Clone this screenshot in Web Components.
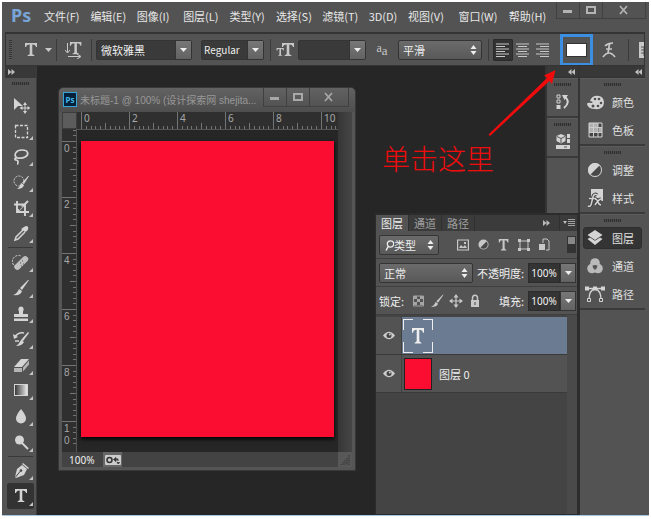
<!DOCTYPE html>
<html lang="zh-CN">
<head>
<meta charset="utf-8">
<title>Photoshop</title>
<style>
html, body { height: 100%; }
body {
  margin: 0; box-sizing: border-box; padding: 2px 2px 4px 2px; background: #fff; overflow: hidden;
  font: 11px/14px "Noto Sans CJK SC", "Liberation Sans", sans-serif; color: #e4e4e4;
}
</style>
</head>
<body>
<ps-app></ps-app>
<script>
const BASE = `*{box-sizing:border-box} button,select,input{font:inherit;color:inherit;margin:0;padding:0;border:0;background:none;outline:0;border-radius:0} button{display:flex;align-items:center;justify-content:center;white-space:nowrap} [hidden]{display:none}`;
function define(tag, css, html) {
  customElements.define(tag, class extends HTMLElement {
    constructor() {
      super();
      const t = document.createElement('template');
      t.innerHTML = `<style>${BASE}${css}</style>` + (typeof html === 'function' ? html(this) : html);
      this.attachShadow({ mode: 'open' }).append(t.content.cloneNode(true));
    }
  });
}

const letterT = '<path d="M1 0h12v4h-1q-.4-2.6-3.7-2.6v9q0 1.5 2 1.6v1H3.7v-1q2-.1 2-1.6v-9Q2.4 1.4 2 4H1z"/>';
const brushPath = '<path d="M17 1L10 11 8 9l8-8zM7 10l3 2q-1 5-9 4 4-1 6-6z"/>';
const ICONS = {
  move: [18, 18, '<path d="M2 2l9 8-5 0-4 4z"/><path d="M13 8v8M9 12h8" stroke="currentColor" fill="none"/><path d="M13 6l2 3h-4zM13 18l2-3h-4zM7.500 12l3-2v4zM18.500 12l-3-2v4z"/>'],
  marquee: [18, 18, '<rect x="3.500" y="3.500" width="12" height="12" fill="none" stroke="currentColor" stroke-width="1.300" stroke-dasharray="3 1.500"/>'],
  lasso: [18, 18, '<path d="M5 11C1 8 4 3 10 3c7 0 7 5 3 7-3 2-6 1-8 1-2-1-3 2-1 2 3 0 2 4 1 4" fill="none" stroke="currentColor" stroke-width="1.700"/>'],
  quick: [18, 18, '<circle cx="7" cy="8" r="5" fill="none" stroke="currentColor" stroke-dasharray="2 1.200"/><path d="M17 3l-5 8-2-1 6-7zM9 10l3 2q-1 4-7 4 3-2 4-6z"/>'],
  crop: [18, 18, '<path d="M5 2v11h12M2 5.500h11V17M6 12l10-10" fill="none" stroke="currentColor" stroke-width="1.900"/><path d="M7 7.500h4L7 11.500z" fill="#535353"/>'],
  dropper: [18, 18, '<path d="M12 3q3-2 4 0t-1 4l-2 1-4-3z"/><path d="M11 6L4 13l-1 3 3-1 7-7" fill="none" stroke="currentColor" stroke-width="1.500"/>'],
  heal: [18, 18, '<path d="M4 14a6 6 0 0 1 5-11" fill="none" stroke="currentColor" stroke-dasharray="2 1.200"/><rect x="1" y="6.500" width="17" height="6" rx="3" transform="rotate(-45 10 10)" opacity=".85"/><path d="M8 10h1m1-2h1m0 3h1m-3 2h1" stroke="#555"/>'],
  brush: [18, 18, brushPath],
  stamp: [18, 18, '<path d="M7 8q-2-5 2-5.500 4 .5 2 5.500v2h5v3H2v-3h5zM2 14.500h14V17H2z"/>'],
  history: [18, 18, '<path d="M17 3l-6 8-2-1 7-8zM9 10l3 2q-2 4-8 4 3-2 5-6z"/><path d="M3 7q3-5 9-4M3 11h4" fill="none" stroke="currentColor" stroke-width="1.500"/><path d="M1 4l1 5 4-2z"/>'],
  eraser: [18, 18, '<path d="M9 3h8l-7 8H2z"/><path d="M2 12h8v4H2zM11 11.500l6-7v4l-6 7z" opacity=".75"/>'],
  gradient: [18, 18, '<defs><linearGradient id="g"><stop stop-color="#333"/><stop offset="1" stop-color="#eee"/></linearGradient></defs><rect x="2.500" y="3.500" width="13" height="11" fill="url(#g)" stroke="currentColor"/>'],
  blur: [18, 18, '<path d="M9 2q5 6 5 9.500a5 5 0 0 1-10 0Q4 8 9 2z"/>'],
  dodge: [18, 18, '<circle cx="7.500" cy="7" r="4.500"/><path d="M10 10l6 6" stroke="currentColor" stroke-width="2"/>'],
  pen: [18, 18, '<path d="M10 4l5 4-3 6-8 3-1-1 2-8z"/><path d="M11 2l6 5-1 1-6-5z"/><path d="M3.500 16l5-6" stroke="#444"/><circle cx="9" cy="9.500" r="1.300" fill="#444"/>'],
  type: [14, 14, letterT],
  typeSmall: [11, 12, '<g transform="scale(.8 .88)">' + letterT + '</g>'],
  typeLarge: [14, 16, '<g transform="scale(1 1.2)">' + letterT + '</g>'],
  brushSmall: [14, 14, '<g transform="scale(.8)">' + brushPath + '</g>'],
  adjustSmall: [11, 11, '<circle cx="5.500" cy="5.500" r="5"/><path d="M8.500 2.500a4.200 4.200 0 0 1-6 6z" fill="#484848"/>'],
  orient: [18, 18, '<g transform="translate(4 1) scale(.95)">' + letterT + '</g><path d="M2.500 2v9M0 9l2.500 3L5 9M3 15.500h12M12 13l4 2.500-4 2.500" fill="none" stroke="currentColor"/>'],
  size: [18, 16, '<g transform="translate(5 1)">' + letterT + '</g><g transform="translate(0 6) scale(.6)">' + letterT + '</g>'],
  left: [16, 14, '<path d="M1 1h13M1 3.500h9M1 6h13M1 8.500h9M1 11h13M1 13.500h9" stroke="currentColor"/>'],
  center: [16, 14, '<path d="M1 1h13M3 3.500h9M1 6h13M3 8.500h9M1 11h13M3 13.500h9" stroke="currentColor"/>'],
  right: [16, 14, '<path d="M1 1h13M5 3.500h9M1 6h13M5 8.500h9M1 11h13M5 13.500h9" stroke="currentColor"/>'],
  warp: [16, 18, '<path d="M4 5q3-3 8-3M8.500 3L7 12M5 8h6M2 16q6-8 12 0" fill="none" stroke="currentColor" stroke-width="1.700"/>'],
  panel: [14, 16, '<path d="M1 0h8l5 4v12H1z"/><path d="M3 5h9M3 8h9M3 11h9M6 5v9" stroke="#555"/>'],
  caret: [7, 4, '<path d="M0 0h7L3.500 4z"/>'],
  updown: [7, 10, '<path d="M.5 4l3-4 3 4zM.5 6h6l-3 4z"/>'],
  collapse: [7, 6, '<path d="M3.500 0v6L0 3zM7 0v6L3.500 3z"/>'],
  expand: [7, 6, '<path d="M0 0v6l3.500-3zM3.500 0v6L7 3z"/>'],
  more: [12, 8, '<path d="M0 2h4L2 5z"/><path d="M5 .5h7M5 2.500h7M5 4.500h7M5 6.500h7" stroke="currentColor" stroke-width=".8"/>'],
  actions: [14, 16, '<path d="M1 1h3v3H1zM1 6h3v3H1z" fill="none" stroke="currentColor"/><path d="M.5 11h4v4h-4zM6 1h6L8.500 6z"/><path d="M9 3q6 5-1 11" fill="none" stroke="currentColor" stroke-width="2"/>'],
  props: [14, 16, '<path d="M5 0l4.500 2v5L5 9.500.5 7V2zM11 0h3v4h-3zM11 5h3v4h-3zM0 11h14v4H0z"/><path d="M1 2.500l4 2 4-2M5 4.500V9M8 13h3" stroke="#555" fill="none"/>'],
  palette: [17, 15, '<path d="M3 6Q5 0 12 1q5 1 5 7-1 7-9 6-7 0-8-5 0-2 5-1 2-1-2-2z"/><g fill="#505050"><circle cx="8" cy="4" r="1.300"/><circle cx="12" cy="4" r="1.300"/><circle cx="14" cy="8" r="1.300"/><circle cx="11" cy="11" r="1.300"/><circle cx="6" cy="11" r="1.500"/></g>'],
  swatches: [15, 16, '<path d="M1 1h13v14H1z" fill="#444" stroke="currentColor"/><path d="M1 1h9v4H1zM1 6h4v4H1zM6 6h4v4H6zM11 6h3v4h-3z" opacity=".75"/><path d="M5.500 1v14M10 1v14M1 5.500h13M1 10.500h13" stroke="#ccc"/>'],
  adjust: [16, 16, '<circle cx="8" cy="8" r="7"/><path d="M13 3A7 7 0 0 1 3 13z" fill="#484848"/><circle cx="8" cy="8" r="6.500" fill="none" stroke="currentColor"/>'],
  styles: [17, 18, '<path d="M4 0h12v12h-4l-5-4-3 2z"/><path d="M10 6q-3-2-4 2l-2 8q-1 2-3 1M2 9.500h7M8 10q2 0 3 3t3 3M14 10q-3 1-6 6" fill="none" stroke="#444" stroke-width="3.500"/><path d="M10 6q-3-2-4 2l-2 8q-1 2-3 1M2 9.500h7M8 10q2 0 3 3t3 3M14 10q-3 1-6 6" fill="none" stroke="currentColor" stroke-width="1.500"/>'],
  layers: [16, 16, '<path d="M8 0l7.500 5L8 10 .5 5zM.5 9L3 7.500l5 3.300 5-3.300L15.500 9 8 15z"/>'],
  channels: [16, 16, '<g opacity=".8"><circle cx="8" cy="5" r="4.800"/><circle cx="5" cy="10.500" r="4.800"/><circle cx="11" cy="10.500" r="4.800"/></g><path d="M5.500 7.500q2.500-1 5 0 0 3-2.500 4.500-2.500-1.500-2.500-4.500z" fill="#555"/>'],
  paths: [20, 17, '<path d="M4 2.500h12M4 14Q4 4 10 3q6 1 6 11" fill="none" stroke="currentColor" stroke-width="1.300"/><path d="M0 .5h4v4H0zM16 .5h4v4h-4zM8 .5h4v4H8z"/><path d="M2.500 12.500h3v3h-3zM14.500 12.500h3v3h-3z" fill="#505050" stroke="currentColor"/>'],
  search: [9, 12, '<circle cx="5.500" cy="4" r="3.200" fill="none" stroke="currentColor" stroke-width="1.200"/><path d="M3.500 6L1 10.500" stroke="currentColor" stroke-width="1.500"/>'],
  image: [12, 12, '<path d="M.6 1h10.800v10H.6z" fill="none" stroke="currentColor" stroke-width="1.200"/><path d="M2 9l2-3 2 2 2-2 2 3zM7 3h2v2H7z"/>'],
  lock: [10, 14, '<path d="M1 6h8v7H1z"/><path d="M2.500 7V4q0-2.800 2.500-2.800T7.500 4v3" fill="none" stroke="currentColor" stroke-width="1.500"/><path d="M5 8v3" stroke="#444"/>'],
  shape: [12, 12, '<path d="M2 2h8v8H2z" fill="none" stroke="currentColor"/><path d="M0 0h3v3H0zM9 0h3v3H9zM0 9h3v3H0zM9 9h3v3H9z"/>'],
  smart: [11, 13, '<path d="M4 5V1h4l2 2v9H7" fill="none" stroke="currentColor"/><path d="M0 6h6v6H0z"/>'],
  checker: [11, 12, '<g opacity=".7"><path d="M.5 1h10v10H.5z" fill="none" stroke="currentColor"/><path d="M1 1h3v3H1zM7 1h3v3H7zM4 4h3v3H4zM1 7h3v3H1zM7 7h3v3H7z"/></g>'],
  cross: [14, 14, '<path d="M7 2v10M2 7h10" stroke="currentColor" stroke-width="1.200"/><path d="M7 0l2.500 3.500h-5zM7 14l2.500-3.500h-5zM0 7l3.500-2.500v5zM14 7l-3.500-2.500v5z"/>'],
  eye: [12, 9, '<path d="M0 4.500Q6-3 12 4.500 6 12 0 4.500z"/><circle cx="6" cy="4.500" r="2.500" fill="#444"/><circle cx="6.800" cy="3.500" r="1"/>'],
  min: [10, 10, '<path d="M0 5h9v3H0z"/>'],
  max: [10, 10, '<path d="M1 2h8v6H1z" fill="none" stroke="currentColor" stroke-width="2"/>'],
  close: [10, 10, '<path d="M1 1l7 8M8 1L1 9" stroke="currentColor" stroke-width="1.700"/>'],
  status: [18, 13, '<rect x="1" y="2" width="16" height="10" rx="1"/><circle cx="5.500" cy="7" r="2.500" fill="none" stroke="#333" stroke-width="1.500"/><path d="M9.500 6.500l2.500-2v4zM12 6h2v2M15.500 9.500l-2.500 0 1.300 1.500z" fill="#333" stroke="#333" stroke-width=".8"/>'],
  resize: [10, 10, '<path d="M9 0v10M7 3v7M5 5v5M3 7v3M1 9v1" stroke="currentColor" stroke-dasharray="1.500 .7"/>']
};
define('ps-icon', ':host{display:inline-flex;flex:none} svg{display:block;fill:currentColor}', el => {
  const [w, h, body] = ICONS[el.getAttribute('name')];
  return `<svg width="${w}" height="${h}" viewBox="0 0 ${w} ${h}" aria-hidden="true">${body}</svg>`;
});
const icon = n => `<ps-icon name="${n}"></ps-icon>`;

define('ps-grip', ':host{display:block;flex:none;width:17px;height:3px;background:repeating-linear-gradient(90deg,#303030 0 1px,#4a4a4a 1px 2px)} :host([upright]){width:3px;height:20px;background:repeating-linear-gradient(#333 0 1px,#5a5a5a 1px 2px)}', '');

define('ps-select', `
:host{display:flex;height:20px;position:relative;border:1px solid #343434;border-radius:2px;background:linear-gradient(#6b6b6b,#595959)}
:host([dark]){background:#3a3a3a}
select{appearance:none;width:100%;padding-left:var(--inset,4px);font-size:var(--size,11px);line-height:14px}
.arrow{position:absolute;right:0;top:0;bottom:0;width:16px;display:grid;place-items:center;pointer-events:none}
:host([dark]) .arrow{background:linear-gradient(#777,#636363);border-left:1px solid #343434}
.lead{position:absolute;left:5px;top:4px;display:flex;pointer-events:none}`,
el => `<select aria-label="${el.getAttribute('label')}"><option>${el.getAttribute('value') || ''}</option></select>
<span class="lead">${el.hasAttribute('lead') ? icon(el.getAttribute('lead')) : ''}</span><span class="arrow">${icon(el.hasAttribute('dark') ? 'caret' : 'updown')}</span>`);

define('ps-percent', `
:host{display:flex;align-items:center;justify-content:flex-end;height:20px;flex:none}
label{padding-right:4px;white-space:nowrap}
input{width:32px;height:20px;background:#343434;border:1px solid #2c2c2c;text-align:center;font:10px "Noto Sans",sans-serif;color:#f2f2f2}
button{width:16px;height:20px;background:linear-gradient(#777,#636363);border:1px solid #343434}`,
el => `<label for="v">${el.getAttribute('label')}</label><input id="v" value="100%"><button aria-label="${el.getAttribute('label')}">${icon('caret')}</button>`);

define('ps-window-buttons', `
:host{display:flex;height:17px;flex:none;color:#b4b4b4;border:1px solid #404040;border-top:0}
button{width:23px;border-right:1px solid #404040} button:last-child{border:0;width:var(--close,42px)}`,
`<button aria-label="最小化">${icon('min')}</button><button aria-label="最大化">${icon('max')}</button><button aria-label="关闭">${icon('close')}</button>`);

define('ps-menubar', `
:host{display:flex;height:30px;align-items:flex-start}
b{font:bold 18px/26px "Noto Sans",sans-serif;color:#78a5d8;width:36px;padding-left:6px;flex:none}
nav{display:flex;flex:1;min-width:0;padding-top:6px}
button{height:16px;justify-content:flex-start;width:47px;padding-left:3px;color:#e8e8e8}
.n{width:40px} .w{width:51px}`,
`<b>Ps</b><nav>${['文件(F)', '编辑(E)', '图像(I)', '图层(L)', '类型(Y)', '选择(S)', '滤镜(T)', '3D(D)', '视图(V)', '窗口(W)', '帮助(H)'].map((t, i) => `<button class="${i === 7 ? 'n' : i > 7 ? 'w' : ''}">${t}</button>`).join('')}</nav><ps-window-buttons></ps-window-buttons>`);

define('ps-options', `
:host{display:flex;align-items:center;height:34px;border:1px solid #343434;border-top-width:2px;padding-left:3px;overflow:hidden;color:#c8c8c8}
:host>*{flex:none}
i{width:1px;height:22px;background:#3b3b3b}
.t{width:40px;gap:7px;margin-right:4px;justify-content:flex-end} .o{width:34px}
.fam{width:96px;margin:0 9px 0 4px} .sty{width:63px;margin-right:6px;--inset:2px;--size:10px}
.sz{width:27px;display:grid;place-items:center} .num{width:68px}
.aa{width:32px;text-align:center;font:13px/16px "Liberation Serif",serif;white-space:nowrap} .aa small{font-size:12px;vertical-align:3px}
.sm{width:84px;margin-right:6px}
ps-select{color:#eee}
.al{width:20px;height:22px} .al[aria-pressed=true]{background:#333;border-radius:2px;box-shadow:inset 0 0 0 1px #2a2a2a}
.aligns{display:flex;padding:0 7px 0 4px}
.color{width:33px;height:32px;border:3px solid #3c8fe0}
.color span{width:21px;height:14px;background:#fff;border:1px solid #333}
.wp{width:32px;height:22px;margin-right:3px}.end{margin-left:9px}`,
`<ps-grip upright></ps-grip><button class="t" aria-label="文字工具">${icon('type')}${icon('caret')}</button><i></i>
<button class="o" aria-label="切换文本取向">${icon('orient')}</button><i></i>
<ps-select class="fam" dark label="字体" value="微软雅黑"></ps-select><ps-select class="sty" dark label="字体样式" value="Regular"></ps-select><i></i>
<span class="sz">${icon('size')}</span><ps-select class="num" dark label="字号"></ps-select><span class="aa"><small>a</small>a</span>
<ps-select class="sm" label="消除锯齿" value="平滑"></ps-select><i></i>
<div class="aligns"><button class="al" aria-pressed="true" aria-label="左对齐">${icon('left')}</button><button class="al" aria-label="居中">${icon('center')}</button><button class="al" aria-label="右对齐">${icon('right')}</button></div>
<button class="color" aria-label="文本颜色"><span></span></button><button class="wp" aria-label="变形文字">${icon('warp')}</button><i></i><button class="end" aria-label="面板">${icon('panel')}</button>`);

const TOOLS = [['move', '移动'], ['marquee', '选框'], ['lasso', '套索'], ['quick', '快速选择'], ['crop', '裁剪'], ['dropper', '吸管'], 0, ['heal', '修复'], ['brush', '画笔'], ['stamp', '图章'], ['history', '历史画笔'], ['eraser', '橡皮擦'], ['gradient', '渐变'], ['blur', '模糊'], ['dodge', '减淡'], 0, ['pen', '钢笔'], ['type', '文字']];
define('ps-toolbar', `
:host{display:flex;flex-direction:column;width:32px;flex:none;background:#535353;border-right:1px solid #3a3a3a;padding-bottom:6px}
header{height:12px;background:#383838;padding:4px 3px;flex:none;display:flex;align-items:center;color:#c0c0c0}
ps-grip{margin:4px 0 7px 7px}
button{flex:1;min-height:20px;margin:0 2px;position:relative;color:#d4d4d4;width:27px}
button.m::after{content:"";position:absolute;right:1px;bottom:3px;border:2px solid transparent;border-right-color:#c4c4c4;border-bottom-color:#c4c4c4}
button[aria-pressed=true]{background:#333;border-radius:2px}
hr{margin:1px 3px;border:0;height:1px;background:#383838;width:25px;flex:none}`,
`<header>${icon('expand')}</header><ps-grip></ps-grip>` + TOOLS.map(t => t ? `<button class="${t[0] === 'move' ? '' : 'm'}" aria-label="${t[1]}" aria-pressed="${t[0] === 'type'}">${icon(t[0])}</button>` : '<hr>').join(''));

define('ps-ruler', `
:host{display:block;background:#2f2f2f;overflow:hidden} svg{display:block}
text{font:10px "Noto Sans",sans-serif;fill:#a8a8a8} line{stroke:#747474;shape-rendering:crispEdges}
:host([vertical]) text{font:10px "Liberation Sans",sans-serif}`,
el => {
  const vertical = el.hasAttribute('vertical'), unit = vertical ? 28 : 24, origin = vertical ? 12 : 4, thick = vertical ? 14 : 17;
  let out = '';
  for (let k = -2; k <= 54; k++) {
    const p = Math.round(origin + k * unit / 5), major = k % 10 === 0, len = major ? thick : k % 5 === 0 ? 6 : 3;
    if (p < 0 || p > (vertical ? 322 : 262)) continue;
    out += vertical ? `<line x1="${thick - len}" x2="${thick}" y1="${p}" y2="${p}"/>` : `<line y1="${thick - len}" y2="${thick}" x1="${p}" x2="${p}"/>`;
    if (!major || k < 0) continue;
    const n = String(k / 5);
    out += vertical ? [...n].map((c, i) => `<text x="2" y="${p + 11 + i * 12}">${c}</text>`).join('') : `<text x="${p + 3}" y="10">${n}</text>`;
  }
  return `<svg width="${vertical ? 14 : 264}" height="${vertical ? 322 : 17}">${out}</svg>`;
});

define('ps-document', `
:host{display:flex;flex-direction:column;background:#434343;border:3px solid #555;border-top:0;border-radius:4px 4px 0 0;outline:1px solid #383838}
header{display:flex;height:24px;flex:none;background:linear-gradient(#626262,#4e4e4e);align-items:flex-start;color:#989898;margin:0 -3px;padding:0 6px 0 4px;border-radius:4px 4px 0 0}
.ps{width:14px;height:15px;margin:4px 3px 0 0;background:#06223a;border:1px solid #37a4d8;color:#43b7ea;font:bold 8px/13px "Noto Sans",sans-serif;text-align:center;flex:none}
h1{margin:0;font-size:10px;font-weight:400;line-height:25px;flex:1;min-width:0;white-space:nowrap;font-family:"Liberation Sans","Noto Sans CJK SC",sans-serif}
ps-window-buttons{--close:38px;color:#a8a8a8;height:19px}
main{flex:1;display:grid;grid-template:17px 1fr 15px/15px 1fr 14px;min-height:0}
.corner{background:#5c5c5c;border:1px solid #3d3d3d}
.side{grid-area:1/3/3/4;background:linear-gradient(90deg,#363636,#464646)}
ps-ruler[vertical]{border-right:1px solid #555}
.stage{background:#262626;padding:11px 4px 15px 4px;display:flex;border-top:1px solid #555}
.art{flex:1;background:#fb0d32;box-shadow:0 2px 4px #000}
footer{grid-column:1/3;display:flex;align-items:center;gap:9px;padding-left:7px;font:10px/14px "Noto Sans",sans-serif;color:#eee}
footer button{width:19px;height:15px;background:#666;color:#ccc}
.rs{display:grid;place-items:center;background:#585858;color:#333}`,
`<header><span class="ps">Ps</span><h1>未标题-1 @ 100% (设计探索网 shejita...</h1><ps-window-buttons></ps-window-buttons></header>
<main><span class="corner"></span><ps-ruler></ps-ruler><span class="side"></span><ps-ruler vertical></ps-ruler><div class="stage"><div class="art"></div></div>
<footer><span>100%</span><button aria-label="状态">${icon('status')}</button></footer><span class="rs">${icon('resize')}</span></main>`);

define('ps-dock', `
:host{display:flex;flex-direction:column;flex:none;background:#535353;color:#d4d4d4;border-left:2px solid #343434}
header{height:12px;flex:none;background:#383838;display:flex;justify-content:flex-end;align-items:center;padding-right:3px;color:#c0c0c0;border-bottom:1px solid #333}`,
`<header>${icon('collapse')}</header><slot></slot>`);
define('ps-group', ':host{display:block;border-bottom:2px solid #3a3a3a;padding:4px 3px 0 3px;border-top:1px solid #5c5c5c} ps-grip{margin:0 auto 2px}', '<ps-grip></ps-grip><slot></slot>');
define('ps-dock-button', `
:host{display:block} button{width:100%;height:28px;justify-content:flex-start;color:#e0e0e0;border:1px solid transparent}
span{width:20px;margin:0 7px 0 1px;display:flex;justify-content:center;flex:none;color:#d4d4d4}
:host([active]) button{background:#343434;border-color:#2e2e2e;border-radius:3px;height:22px;margin:3px 0}
:host([active]){display:flow-root}
:host([compact]) button{justify-content:center}:host([compact]) span{margin:0}`,
el => `<button aria-label="${el.getAttribute('label')}"><span>${icon(el.getAttribute('icon'))}</span>${el.hasAttribute('compact') ? '' : el.getAttribute('label')}</button>`);

define('ps-layer', `
:host{display:flex;height:38px;border-bottom:1px solid #3a3a3a;background:#535353;color:#eee}
.eye{width:26px;border-right:1px solid #404040;color:#ccc;flex:none}
.body{flex:1;display:flex;align-items:center;padding-left:1px}
:host([active]) .body{background:#6b7c92}
.thumb{width:30px;height:34px;display:grid;place-items:center;margin-right:7px}
.thumb.red{width:28px;height:32px;margin:0 7px 0 1px;background:#fb0d32;border:1px solid #222}
.thumb.text{--c:#eee;background:
linear-gradient(var(--c),var(--c)) 0 0/10px 1px,linear-gradient(var(--c),var(--c)) 0 0/1px 11px,
linear-gradient(var(--c),var(--c)) 100% 0/10px 1px,linear-gradient(var(--c),var(--c)) 100% 0/1px 11px,
linear-gradient(var(--c),var(--c)) 0 100%/10px 1px,linear-gradient(var(--c),var(--c)) 0 100%/1px 11px,
linear-gradient(var(--c),var(--c)) 100% 100%/10px 1px,linear-gradient(var(--c),var(--c)) 100% 100%/1px 11px;background-repeat:no-repeat}`,
el => `<button class="eye" aria-label="可见性">${icon('eye')}</button><div class="body"><span class="thumb ${el.getAttribute('kind')}">${el.getAttribute('kind') === 'text' ? icon('typeLarge') : ''}</span><slot></slot></div>`);

define('ps-layers-panel', `
:host{display:flex;flex-direction:column;background:#535353;border:1px solid #2c2c2c;border-top-width:2px;border-right-width:3px}
.tabs{display:flex;height:16px;background:#3b3b3b;color:#a0a0a0;flex:none;align-items:stretch}
.tabs button{width:33px;border-right:1px solid #303030}
.tabs button[aria-selected=true]{background:#535353;color:#eee}
.tabs .ico{width:18px;border:0;color:#bbb} .tabs .ico:last-child{border-left:1px solid #303030;margin-left:4px}
.sp{flex:1}
.row{display:flex;align-items:center;flex:none;height:28px;border-bottom:1px solid #3f3f3f;padding:0 1px 0 3px;color:#eee}
.filters,.locks{display:flex;align-items:center;color:#c8c8c8}
.filters{flex:1;justify-content:space-between;padding:0 16px 0 17px}
.filters button,.locks button{height:20px;width:14px}
.switch{width:9px;height:17px;background:linear-gradient(#888 45%,#333 45%);border:1px solid #333}
.locks{gap:5px;flex:1;padding-left:7px}
.type{width:60px;--inset:14px} .mode{width:94px}
.row ps-percent{flex:1}
.row .fill{flex:none}
.list{flex:1;padding:2px 10px 0 0;background:linear-gradient(90deg,#444 0 calc(100% - 10px),#4a4a4a 0)}`,
`<div class="tabs" role="tablist"><button role="tab" aria-selected="true">图层</button><button role="tab">通道</button><button role="tab">路径</button><span class="sp"></span><button class="ico" aria-label="折叠">${icon('expand')}</button><button class="ico" aria-label="菜单">${icon('more')}</button></div>
<div class="row"><ps-select class="type" label="过滤" value="类型" lead="search"></ps-select><div class="filters">${[['image', '像素'], ['adjustSmall', '调整'], ['typeSmall', '文字'], ['shape', '形状'], ['smart', '智能对象']].map(([n, l]) => `<button aria-label="${l}">${icon(n)}</button>`).join('')}</div><button class="switch" aria-label="过滤开关"></button></div>
<div class="row"><ps-select class="mode" label="混合模式" value="正常"></ps-select><ps-percent label="不透明度:"></ps-percent></div>
<div class="row"><span>锁定:</span><div class="locks">${[['checker', '透明像素'], ['brushSmall', '图像像素'], ['cross', '位置'], ['lock', '全部']].map(([n, l]) => `<button aria-label="${l}">${icon(n)}</button>`).join('')}</div><ps-percent class="fill" label="填充:"></ps-percent></div>
<div class="list"><ps-layer kind="text" active></ps-layer><ps-layer kind="red">图层 0</ps-layer></div>`);

define('ps-note', `
:host{display:block;color:#f00c0c}
p{margin:0;position:absolute;left:0;top:71px;font:300 28px/36px "Noto Sans CJK SC",sans-serif;white-space:nowrap}
svg{position:absolute;left:105px;top:0}`,
`<svg width="72" height="70" viewBox="0 0 72 70" fill="currentColor"><path d="M1.500 65.500L60 9l-3-2.500L68.500 1 65 15l-2.500-3L3 67z"/></svg><p>单击这里</p>`);

define('ps-app', `
:host{display:flex;flex-direction:column;height:100%;background:#535353;padding:0 4px 0 3px;border-bottom:1px solid #a9c6dc;overflow:hidden}
ps-menubar{margin-right:-1px}
.work{flex:1;display:flex;min-height:0;position:relative;background:#262626}
.desk{flex:1}
.narrow{width:33px;margin-bottom:301px}
.wide{width:67px}
ps-document{position:absolute;left:54px;top:22px;width:296px;height:382px}
ps-layers-panel{position:absolute;right:65px;top:147px;bottom:0;width:205px}
ps-note{position:absolute;left:377px;top:3px}`,
`<ps-menubar></ps-menubar><ps-options></ps-options><div class="work"><ps-toolbar></ps-toolbar><div class="desk"></div>
<ps-dock class="narrow"><ps-group><ps-dock-button compact icon="actions" label="历史记录"></ps-dock-button></ps-group><ps-group><ps-dock-button compact icon="props" label="属性"></ps-dock-button></ps-group></ps-dock>
<ps-dock class="wide"><ps-group><ps-dock-button icon="palette" label="颜色"></ps-dock-button><ps-dock-button icon="swatches" label="色板"></ps-dock-button></ps-group>
<ps-group><ps-dock-button icon="adjust" label="调整"></ps-dock-button><ps-dock-button icon="styles" label="样式"></ps-dock-button></ps-group>
<ps-group><ps-dock-button active icon="layers" label="图层"></ps-dock-button><ps-dock-button icon="channels" label="通道"></ps-dock-button><ps-dock-button icon="paths" label="路径"></ps-dock-button></ps-group></ps-dock>
<ps-document></ps-document><ps-layers-panel></ps-layers-panel><ps-note></ps-note></div>`);
</script>
</body>
</html>
